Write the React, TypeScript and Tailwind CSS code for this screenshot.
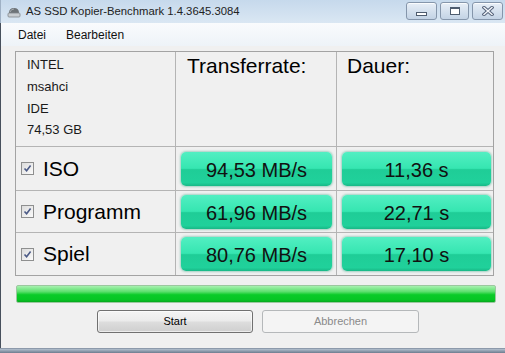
import React from "react"

const rows = [
  { name: "ISO", rate: "94,53 MB/s", time: "11,36 s", h: "h-[44px]" },
  { name: "Programm", rate: "61,96 MB/s", time: "22,71 s", h: "h-[42px]" },
  { name: "Spiel", rate: "80,76 MB/s", time: "17,10 s", h: "h-[43px]" },
]

function Check() {
  return (
    <div className="w-[13px] h-[13px] border border-[#8e8f8f] bg-gradient-to-br from-[#dcdcdc] to-[#fbfbfb] flex items-center justify-center shrink-0">
      <svg width="9" height="9" viewBox="0 0 9 9">
        <path d="M1.5 4.5 L3.6 6.8 L7.6 1.6" fill="none" stroke="#4b5a86" strokeWidth="1.6" />
      </svg>
    </div>
  )
}

function GreenBox({ text, w }: { text: string; w: string }) {
  return (
    <div
      className={`${w} h-[34px] rounded-[5px] bg-[linear-gradient(180deg,#52efc2_0%,#36e6b1_48%,#1fcd97_52%,#20d19b_90%,#18b886_100%)] shadow-[0_0_2px_1px_rgba(20,150,110,0.35)] flex items-center justify-center pt-[2px] text-[20px] text-[#111]`}
    >
      {text}
    </div>
  )
}

function WinBtn({ w, children }: { w: string; children: React.ReactNode }) {
  return (
    <div
      className={`${w} h-[18px] rounded-[3px] border border-[#8596ab] bg-gradient-to-b from-[#e8eff7] via-[#d5e1ee] to-[#c3d3e5] shadow-[inset_0_1px_0_rgba(255,255,255,0.8)] flex items-center justify-center`}
    >
      {children}
    </div>
  )
}

export default function App() {
  return (
    <div className="w-[505px] h-[353px] overflow-hidden flex flex-col bg-[#f0f0f0] font-['Liberation_Sans',Arial,sans-serif] text-[#1a1a1a]">
      {/* Title bar */}
      <div className="h-[23px] shrink-0 flex items-center bg-gradient-to-b from-[#c6d9ec] to-[#dae7f3] border-l border-[#9fb1c5]">
        <svg width="14" height="13" viewBox="0 0 14 13" className="ml-[6px] mt-[1px]">
          <path d="M2 7 Q2 2 7 2 Q12 2 12 7 Z" fill="#6d7377" />
          <path d="M3 6 Q4 3 7 3" fill="none" stroke="#a7adb2" strokeWidth="1" />
          <rect x="1" y="7" width="12" height="4" rx="1" fill="#c9ced2" stroke="#80878c" strokeWidth="0.8" />
        </svg>
        <span className="ml-[5px] text-[11.3px] text-[#222]">AS SSD Kopier-Benchmark 1.4.3645.3084</span>
        <div className="ml-auto mr-[2px] flex gap-[3px] self-start mt-[2px]">
          <WinBtn w="w-[31px]">
            <div className="w-[11px] h-[4px] border border-[#4e5c6e] bg-white mt-[5px]" />
          </WinBtn>
          <WinBtn w="w-[29px]">
            <div className="w-[10px] h-[8px] border border-[#4e5c6e] border-t-2 bg-white" />
          </WinBtn>
          <WinBtn w="w-[31px]">
            <svg width="12" height="10" viewBox="0 0 12 10">
              <path d="M2 1.5 L10 8.5 M10 1.5 L2 8.5" stroke="#55637a" strokeWidth="3.4" strokeLinecap="square" />
              <path d="M2 1.5 L10 8.5 M10 1.5 L2 8.5" stroke="#f4f7fb" strokeWidth="1.4" strokeLinecap="square" />
            </svg>
          </WinBtn>
        </div>
      </div>

      <div className="flex-1 flex flex-col border-l border-[#47505c]">
        {/* Menu */}
        <div className="h-[23px] shrink-0 flex items-center gap-[20px] pl-[17px] bg-gradient-to-b from-[#f9fbfd] to-[#eef3f8] text-[12px] text-[#111]">
          <span>Datei</span>
          <span>Bearbeiten</span>
        </div>

        {/* Table */}
        <div className="pt-[5px] pl-[14px]">
          <div className="w-[479px] border border-[#a3a3a3] flex flex-col">
            <div className="h-[94px] flex">
              <div className="w-[159px] pl-[11px] pt-[2px] flex flex-col text-[13px]">
                <span className="leading-[22px]">INTEL</span>
                <span className="leading-[22px]">msahci</span>
                <span className="leading-[22px]">IDE</span>
                <span className="leading-[20px]">74,53 GB</span>
              </div>
              <div className="w-[161px] border-l border-[#b4b4b4] pl-[11px] pt-[2px] text-[21px] leading-[24px] text-black">
                Transferrate:
              </div>
              <div className="w-[157px] border-l border-[#b4b4b4] pl-[10px] pt-[2px] text-[21px] leading-[24px] text-black">
                Dauer:
              </div>
            </div>
            {rows.map((r) => (
              <div key={r.name} className={`${r.h} flex border-t border-[#b4b4b4]`}>
                <div className="w-[159px] pl-[5px] flex items-center gap-[9px]">
                  <Check />
                  <span className="text-[21px] leading-[24px] text-black">{r.name}</span>
                </div>
                <div className="w-[161px] border-l border-[#b4b4b4] pl-[5px] flex items-center">
                  <GreenBox text={r.rate} w="w-[151px]" />
                </div>
                <div className="w-[157px] border-l border-[#b4b4b4] pl-[5px] flex items-center">
                  <GreenBox text={r.time} w="w-[149px]" />
                </div>
              </div>
            ))}
          </div>
        </div>

        {/* Progress */}
        <div className="mt-[9px] ml-[15px] w-[480px] h-[18px] rounded-[2px] border border-[#9cc79f] bg-[linear-gradient(180deg,#a7f2b0_0%,#5ee06e_35%,#0bcb28_55%,#07c624_85%,#05a81d_100%)]" />

        {/* Buttons */}
        <div className="mt-[7px] flex pl-[96px] gap-[9px]">
          <div className="w-[156px] h-[23px] rounded-[3px] border border-[#707070] bg-[linear-gradient(180deg,#f4f4f4_0%,#ebebeb_48%,#dddddd_52%,#cfcfcf_100%)] shadow-[inset_0_0_0_1px_rgba(255,255,255,0.6)] flex items-center justify-center text-[11px] text-black">
            Start
          </div>
          <div className="w-[157px] h-[23px] rounded-[3px] border border-[#b5b8ba] bg-[#f4f4f4] flex items-center justify-center text-[11px] text-[#8a8a8a]">
            Abbrechen
          </div>
        </div>

        <div className="flex-1" />
      </div>

      {/* Bottom frame */}
      <div className="h-[5px] shrink-0 border-t border-[#8d9aab] bg-gradient-to-b from-[#b3c0ce] to-[#6d7c8f]" />
    </div>
  )
}
